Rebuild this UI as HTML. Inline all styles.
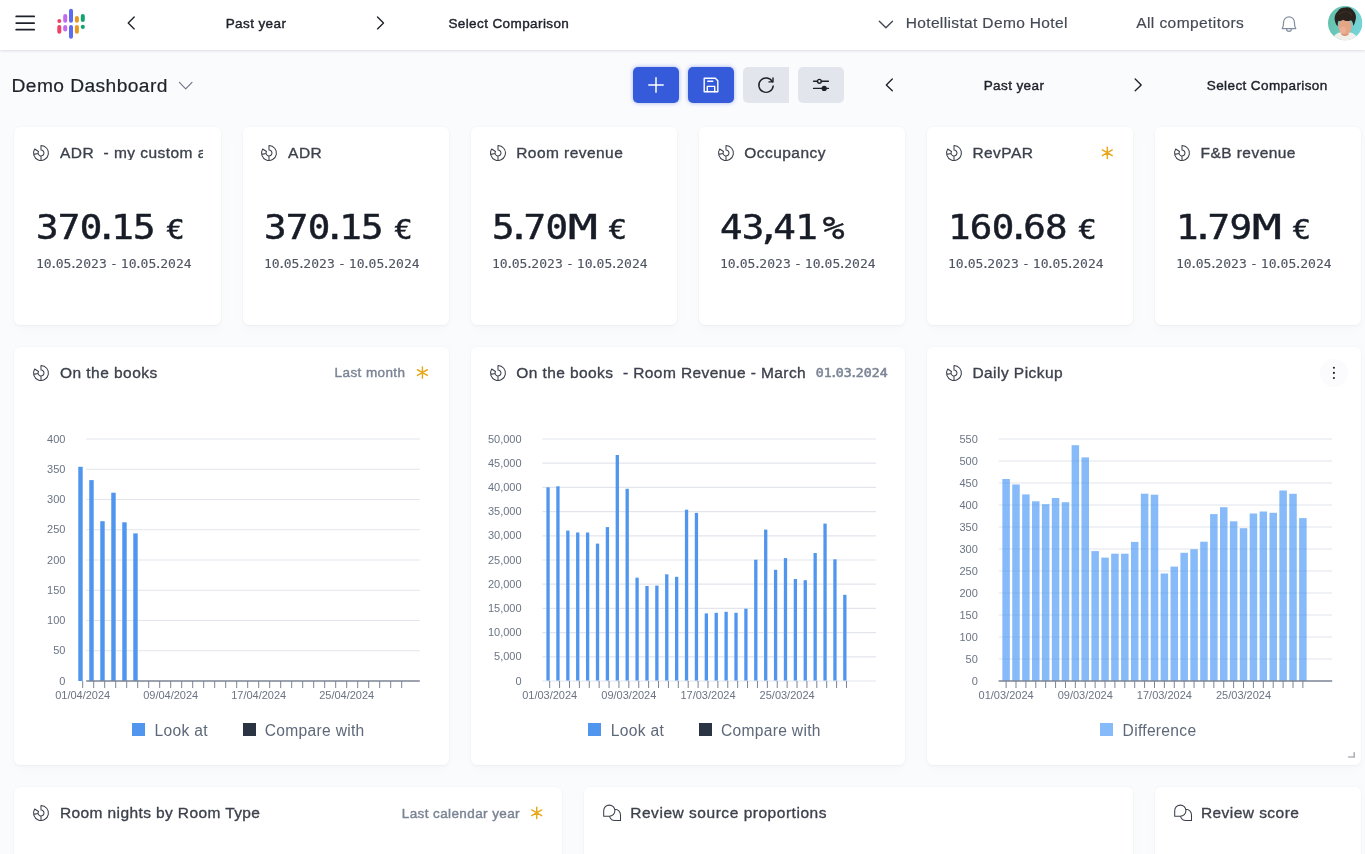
<!DOCTYPE html><html lang="en"><head><meta charset="utf-8"><title>Demo Dashboard</title><style>
*{box-sizing:border-box}
html,body{margin:0;padding:0}
body{width:1365px;height:854px;overflow:hidden;background:#fafbfd;font-family:"Liberation Sans",sans-serif;position:relative;color:#1f2937}
#root{position:absolute;left:0;top:0;width:1365px;height:854px;will-change:transform}
.t{position:absolute;white-space:nowrap}
.m{-webkit-text-stroke:0.42px currentColor}
.tt{-webkit-text-stroke:0.34px currentColor}
.hdr{position:absolute;left:0;top:0;width:1365px;height:50px;background:#fff;box-shadow:0 1px 3px rgba(15,23,42,.09),0 1px 2px rgba(15,23,42,.05)}
.card{position:absolute;background:#fff;border-radius:6px;box-shadow:0 0 3px rgba(15,23,42,.045),0 1px 3px rgba(15,23,42,.04),0 4px 10px rgba(15,23,42,.02)}
.btn{position:absolute;top:67px;width:46px;height:36px;border-radius:5px}
.btn.b{background:#355bdb;box-shadow:0 0 4px rgba(53,91,219,.45)}
.btn.g{background:#e2e5eb}
svg{position:absolute;overflow:visible}
.num{font-family:"DejaVu Sans Mono","Liberation Mono",monospace;-webkit-text-stroke:0.48px currentColor;transform:scaleX(1.13);transform-origin:0 0;letter-spacing:-0.65px}
.num i{font-style:normal;display:inline-block;margin:0 -5.4px}
.num b{font-weight:normal;-webkit-text-stroke:0.3px currentColor;display:inline-block;transform:scaleX(1.34);transform-origin:0 50%;margin-right:7.2px}
.mono{font-family:"DejaVu Sans Mono","Liberation Mono",monospace}
.mono i{font-style:normal;display:inline-block;margin:0 -1.85px}
.dt{transform:scaleX(1.062);transform-origin:0 0;word-spacing:-4.5px}
</style></head><body><div id="root">
<div class="hdr"></div>
<svg style="left:0;top:0" width="60" height="50"><g stroke="#1d212a" stroke-width="1.7" stroke-linecap="round"><path d="M16.2 16.4H34.2M16.2 23.1H34.2M16.2 29.7H34.2"/></g></svg>
<svg style="left:0;top:0" width="100" height="50"><g stroke-linecap="round" stroke-width="4" fill="none"><path stroke="#ee4266" d="M59.3 20.9V21.1"/><path stroke="#ee4266" d="M59.3 26.9V31.7"/><path stroke="#c16bf0" d="M65.2 15.9V20.7"/><path stroke="#c16bf0" d="M65.2 26.9V29.5"/><path stroke="#5b6cf0" d="M71.0 10.8V20.7"/><path stroke="#5b6cf0" d="M71.0 26.9V36.8"/><path stroke="#e59a1f" d="M76.9 18.1V20.7"/><path stroke="#e59a1f" d="M76.9 26.9V31.7"/><path stroke="#12a370" d="M82.8 15.9V20.0"/><path stroke="#12a370" d="M82.8 26.7V26.9"/></g></svg>
<svg style="left:0;top:0" width="1365" height="120"><path d="M134.2 16.9L128.2 22.9L134.2 28.9" fill="none" stroke="#1d212a" stroke-width="1.35" stroke-linecap="round" stroke-linejoin="round"/></svg>
<svg style="left:0;top:0" width="1365" height="120"><path d="M377.5 16.9L383.5 22.9L377.5 28.9" fill="none" stroke="#1d212a" stroke-width="1.35" stroke-linecap="round" stroke-linejoin="round"/></svg>
<div class="t m" style="top:16.57px;font-size:13.5px;line-height:13.5px;color:#1d212a;left:56.00px;width:400px;text-align:center;letter-spacing:0.4px;">Past year</div>
<div class="t m" style="top:16.57px;font-size:13.5px;line-height:13.5px;color:#1d212a;left:448.40px;letter-spacing:0.4px;">Select Comparison</div>
<svg style="left:0;top:0" width="1365" height="120"><path d="M879.3 21.2L885.9 27.8L892.5 21.2" fill="none" stroke="#3f4754" stroke-width="1.35" stroke-linecap="round" stroke-linejoin="round"/></svg>
<div class="t " style="top:15.48px;font-size:15.5px;line-height:15.5px;color:#434955;left:905.70px;letter-spacing:0.36px;-webkit-text-stroke:0.18px currentColor;">Hotellistat Demo Hotel</div>
<div class="t " style="top:15.48px;font-size:15.5px;line-height:15.5px;color:#434955;left:1136.20px;letter-spacing:0.43px;-webkit-text-stroke:0.18px currentColor;">All competitors</div>
<svg style="left:1280px;top:14px" width="18" height="20" viewBox="0 0 18 20"><g fill="none" stroke="#848da0" stroke-width="1.2" stroke-linejoin="round" stroke-linecap="round"><path d="M2.2 14.6C3.4 12.6 3.6 10.4 3.6 8.2a5.4 5.4 0 0 1 10.8 0c0 2.2.2 4.4 1.4 6.4Z"/><path d="M6.6 15a2.4 2.4 0 0 0 4.8 0"/></g></svg>
<svg style="left:1328.3px;top:5.9px" width="34.4" height="34.4" viewBox="0 0 35 35"><defs><clipPath id="av"><circle cx="17.5" cy="17.5" r="17.5"/></clipPath><linearGradient id="avg" x1="0" y1="0" x2="1" y2="0.3"><stop offset="0" stop-color="#62bfa6"/><stop offset="1" stop-color="#74d3d6"/></linearGradient><filter id="avb" x="-10%" y="-10%" width="120%" height="120%"><feGaussianBlur stdDeviation="0.55"/></filter></defs><g clip-path="url(#av)"><rect width="35" height="35" fill="url(#avg)"/><g filter="url(#avb)"><path d="M5 33c1.500-4.500 5.500-6.500 12.500-6.500s10.500 2 12.500 6.500v4H5Z" fill="#f1efe9"/><path d="M13.500 24h7.500v5c-2 2-5.500 2-7.500 0Z" fill="#d99477"/><ellipse cx="17.300" cy="21" rx="6.600" ry="8" fill="#e4a687"/><ellipse cx="15.200" cy="24.500" rx="3" ry="3.500" fill="#efb79b" opacity=".7"/><path d="M7.800 17.500c-2.300-5.500-.500-10 2.500-12.500c1-2.500 4.500-3.800 7.500-3.500c3.500-.800 7 1 8.500 4c2.500 2.500 2.800 7 1.200 10.500c-.300 1.800-1 3.200-2 4c.200-2.800-.800-4.800-2.300-5.500c-2.500 1.500-6 .800-8-.500c-1.500 1.300-3.500 1.500-4.500 1c-.800 1.500-1 3.500-.600 5.500c-1.200-.700-2-1.800-2.300-3Z" fill="#2b221d"/><path d="M11 9c2-2.500 5-3.500 8-3M20 6c2 .500 4 2 4.500 4.500" stroke="#4a3a31" stroke-width="1.2" fill="none" opacity=".6"/></g></g></svg>
<div class="t " style="top:75.95px;font-size:19.2px;line-height:19.2px;color:#1d212a;left:11.60px;letter-spacing:0.42px;-webkit-text-stroke:0.2px currentColor;">Demo Dashboard</div>
<svg style="left:0;top:0" width="1365" height="120"><path d="M179.39999999999998 82.39999999999999L185.7 88.8L192.0 82.39999999999999" fill="none" stroke="#6f7686" stroke-width="1.15" stroke-linecap="round" stroke-linejoin="round"/></svg>
<div class="btn b" style="left:633px"></div><div class="btn b" style="left:688px"></div><div class="btn g" style="left:743px;border-radius:5px 0 0 5px"></div><div class="btn g" style="left:798px"></div>
<svg style="left:633px;top:67px" width="46" height="36"><path d="M23 10.800V25.200M15.800 18H30.200" stroke="#fff" stroke-width="1.5" stroke-linecap="round"/></svg>
<svg style="left:688px;top:67px" width="46" height="36"><g fill="none" stroke="#fff" stroke-width="1.4" stroke-linejoin="round" stroke-linecap="round"><path d="M16.200 11.200H27.300L29.800 13.700V24.800H16.200Z"/><path d="M19.300 24.800V19.400H26.700V24.800"/><path d="M19.800 14.200H24.800"/></g></svg>
<svg style="left:743px;top:67px" width="46" height="36"><g fill="none" stroke="#1d212a" stroke-width="1.4" stroke-linecap="round" stroke-linejoin="round"><path d="M29.400 14.800A7.200 7.200 0 1 0 30.200 18.900"/><path d="M30.000 10.900V14.900H26.000"/></g></svg>
<svg style="left:798px;top:67px" width="46" height="36"><g fill="none" stroke="#1d212a" stroke-width="1.4" stroke-linecap="round"><path d="M15.600 14.300H19.500M23.300 14.300H30.400M15.600 21.400H24.300M28.100 21.400H30.400"/><circle cx="21.400" cy="14.300" r="1.900"/><circle cx="26.200" cy="21.400" r="1.900" fill="#1d212a"/></g></svg>
<svg style="left:0;top:0" width="1365" height="120"><path d="M892.3 79.0L886.3 84.9L892.3 90.80000000000001" fill="none" stroke="#1d212a" stroke-width="1.35" stroke-linecap="round" stroke-linejoin="round"/></svg>
<svg style="left:0;top:0" width="1365" height="120"><path d="M1135.2 79.0L1141.2 84.9L1135.2 90.80000000000001" fill="none" stroke="#1d212a" stroke-width="1.35" stroke-linecap="round" stroke-linejoin="round"/></svg>
<div class="t m" style="top:78.57px;font-size:13.5px;line-height:13.5px;color:#1d212a;left:814.00px;width:400px;text-align:center;letter-spacing:0.4px;">Past year</div>
<div class="t m" style="top:78.57px;font-size:13.5px;line-height:13.5px;color:#1d212a;left:1206.80px;letter-spacing:0.4px;">Select Comparison</div>
<div class="card" style="left:14.40px;top:127.00px;width:206.15px;height:198.00px"></div>
<svg style="left:33.30px;top:145.00px" width="16" height="16" viewBox="0 0 16 16"><path d="M8.0 0.5499999999999998A7.45 7.45 0 1 1 1.68 4.05L5.50 6.44A2.95 2.95 0 1 0 8.0 5.05Z M8.0 10.95V15.45M5.10 8.55L0.68 9.38" fill="none" stroke="#3a3f49" stroke-width="1.05" stroke-linejoin="round" stroke-linecap="round"/></svg>
<div class="t tt" style="top:144.58px;font-size:15.5px;line-height:15.5px;color:#3c414c;left:60.00px;letter-spacing:0.45px;max-width:142.5px;overflow:hidden;">ADR&nbsp; - my custom and long title</div>
<div class="t num" style="top:211.20px;font-size:33.2px;line-height:33.2px;color:#171c26;left:35.80px;">370<i class="p">.</i>15<span style="font-size:27px;margin-left:10px">€</span></div>
<div class="t mono dt" style="top:258.09px;font-size:12.3px;line-height:12.3px;color:#4e5461;left:35.70px;-webkit-text-stroke:0.1px currentColor;">10<i class="p">.</i>05<i class="p">.</i>2023 - 10<i class="p">.</i>05<i class="p">.</i>2024</div>
<div class="card" style="left:242.50px;top:127.00px;width:206.15px;height:198.00px"></div>
<svg style="left:261.40px;top:145.00px" width="16" height="16" viewBox="0 0 16 16"><path d="M8.0 0.5499999999999998A7.45 7.45 0 1 1 1.68 4.05L5.50 6.44A2.95 2.95 0 1 0 8.0 5.05Z M8.0 10.95V15.45M5.10 8.55L0.68 9.38" fill="none" stroke="#3a3f49" stroke-width="1.05" stroke-linejoin="round" stroke-linecap="round"/></svg>
<div class="t tt" style="top:144.58px;font-size:15.5px;line-height:15.5px;color:#3c414c;left:288.10px;letter-spacing:0.45px;">ADR</div>
<div class="t num" style="top:211.20px;font-size:33.2px;line-height:33.2px;color:#171c26;left:263.90px;">370<i class="p">.</i>15<span style="font-size:27px;margin-left:10px">€</span></div>
<div class="t mono dt" style="top:258.09px;font-size:12.3px;line-height:12.3px;color:#4e5461;left:263.80px;-webkit-text-stroke:0.1px currentColor;">10<i class="p">.</i>05<i class="p">.</i>2023 - 10<i class="p">.</i>05<i class="p">.</i>2024</div>
<div class="card" style="left:470.60px;top:127.00px;width:206.15px;height:198.00px"></div>
<svg style="left:489.50px;top:145.00px" width="16" height="16" viewBox="0 0 16 16"><path d="M8.0 0.5499999999999998A7.45 7.45 0 1 1 1.68 4.05L5.50 6.44A2.95 2.95 0 1 0 8.0 5.05Z M8.0 10.95V15.45M5.10 8.55L0.68 9.38" fill="none" stroke="#3a3f49" stroke-width="1.05" stroke-linejoin="round" stroke-linecap="round"/></svg>
<div class="t tt" style="top:144.58px;font-size:15.5px;line-height:15.5px;color:#3c414c;left:516.20px;letter-spacing:0.45px;">Room revenue</div>
<div class="t num" style="top:211.20px;font-size:33.2px;line-height:33.2px;color:#171c26;left:492.00px;">5<i class="p">.</i>70<b>M</b><span style="font-size:27px;margin-left:10px">€</span></div>
<div class="t mono dt" style="top:258.09px;font-size:12.3px;line-height:12.3px;color:#4e5461;left:491.90px;-webkit-text-stroke:0.1px currentColor;">10<i class="p">.</i>05<i class="p">.</i>2023 - 10<i class="p">.</i>05<i class="p">.</i>2024</div>
<div class="card" style="left:698.70px;top:127.00px;width:206.15px;height:198.00px"></div>
<svg style="left:717.60px;top:145.00px" width="16" height="16" viewBox="0 0 16 16"><path d="M8.0 0.5499999999999998A7.45 7.45 0 1 1 1.68 4.05L5.50 6.44A2.95 2.95 0 1 0 8.0 5.05Z M8.0 10.95V15.45M5.10 8.55L0.68 9.38" fill="none" stroke="#3a3f49" stroke-width="1.05" stroke-linejoin="round" stroke-linecap="round"/></svg>
<div class="t tt" style="top:144.58px;font-size:15.5px;line-height:15.5px;color:#3c414c;left:744.30px;letter-spacing:0.45px;">Occupancy</div>
<div class="t num" style="top:211.20px;font-size:33.2px;line-height:33.2px;color:#171c26;left:720.10px;">43<i class="p">,</i>41<span style="font-size:32px;margin-left:5px">%</span></div>
<div class="t mono dt" style="top:258.09px;font-size:12.3px;line-height:12.3px;color:#4e5461;left:720.00px;-webkit-text-stroke:0.1px currentColor;">10<i class="p">.</i>05<i class="p">.</i>2023 - 10<i class="p">.</i>05<i class="p">.</i>2024</div>
<div class="card" style="left:926.80px;top:127.00px;width:206.15px;height:198.00px"></div>
<svg style="left:945.70px;top:145.00px" width="16" height="16" viewBox="0 0 16 16"><path d="M8.0 0.5499999999999998A7.45 7.45 0 1 1 1.68 4.05L5.50 6.44A2.95 2.95 0 1 0 8.0 5.05Z M8.0 10.95V15.45M5.10 8.55L0.68 9.38" fill="none" stroke="#3a3f49" stroke-width="1.05" stroke-linejoin="round" stroke-linecap="round"/></svg>
<div class="t tt" style="top:144.58px;font-size:15.5px;line-height:15.5px;color:#3c414c;left:972.40px;letter-spacing:0.45px;">RevPAR</div>
<div class="t num" style="top:211.20px;font-size:33.2px;line-height:33.2px;color:#171c26;left:948.20px;">160<i class="p">.</i>68<span style="font-size:27px;margin-left:10px">€</span></div>
<div class="t mono dt" style="top:258.09px;font-size:12.3px;line-height:12.3px;color:#4e5461;left:948.10px;-webkit-text-stroke:0.1px currentColor;">10<i class="p">.</i>05<i class="p">.</i>2023 - 10<i class="p">.</i>05<i class="p">.</i>2024</div>
<div class="card" style="left:1154.90px;top:127.00px;width:206.15px;height:198.00px"></div>
<svg style="left:1173.80px;top:145.00px" width="16" height="16" viewBox="0 0 16 16"><path d="M8.0 0.5499999999999998A7.45 7.45 0 1 1 1.68 4.05L5.50 6.44A2.95 2.95 0 1 0 8.0 5.05Z M8.0 10.95V15.45M5.10 8.55L0.68 9.38" fill="none" stroke="#3a3f49" stroke-width="1.05" stroke-linejoin="round" stroke-linecap="round"/></svg>
<div class="t tt" style="top:144.58px;font-size:15.5px;line-height:15.5px;color:#3c414c;left:1200.50px;letter-spacing:0.45px;">F&amp;B revenue</div>
<div class="t num" style="top:211.20px;font-size:33.2px;line-height:33.2px;color:#171c26;left:1176.30px;">1<i class="p">.</i>79<b>M</b><span style="font-size:27px;margin-left:10px">€</span></div>
<div class="t mono dt" style="top:258.09px;font-size:12.3px;line-height:12.3px;color:#4e5461;left:1176.20px;-webkit-text-stroke:0.1px currentColor;">10<i class="p">.</i>05<i class="p">.</i>2023 - 10<i class="p">.</i>05<i class="p">.</i>2024</div>
<svg style="left:0;top:0" width="1365" height="854"><path d="M1107.30 147.10L1107.30 158.50M1102.36 149.95L1112.24 155.65M1102.36 155.65L1112.24 149.95" stroke="#e8a81c" stroke-width="1.45" stroke-linecap="round" fill="none"/></svg>
<div class="card" style="left:14.40px;top:346.60px;width:434.25px;height:418.60px"></div>
<svg style="left:0;top:0" width="1365" height="854"><path d="M86.2 650.75H419.8" stroke="#e3e5eb" stroke-width="1.2"/><path d="M86.2 620.50H419.8" stroke="#e3e5eb" stroke-width="1.2"/><path d="M86.2 590.25H419.8" stroke="#e3e5eb" stroke-width="1.2"/><path d="M86.2 560.00H419.8" stroke="#e3e5eb" stroke-width="1.2"/><path d="M86.2 529.75H419.8" stroke="#e3e5eb" stroke-width="1.2"/><path d="M86.2 499.50H419.8" stroke="#e3e5eb" stroke-width="1.2"/><path d="M86.2 469.25H419.8" stroke="#e3e5eb" stroke-width="1.2"/><path d="M86.2 439.00H419.8" stroke="#e3e5eb" stroke-width="1.2"/><rect x="78.25" y="466.80" width="4.45" height="214.20" fill="#5096ee"/><rect x="89.25" y="480.10" width="4.45" height="200.90" fill="#5096ee"/><rect x="100.25" y="521.20" width="4.45" height="159.80" fill="#5096ee"/><rect x="111.25" y="492.70" width="4.45" height="188.30" fill="#5096ee"/><rect x="122.25" y="522.30" width="4.45" height="158.70" fill="#5096ee"/><rect x="133.25" y="533.40" width="4.45" height="147.60" fill="#5096ee"/><path d="M86.2 681.00H419.8" stroke="#7b8494" stroke-width="1.6"/><path d="M82.70 681.00V688.00" stroke="#7b8494" stroke-width="1"/><path d="M93.70 681.00V688.00" stroke="#7b8494" stroke-width="1"/><path d="M104.70 681.00V688.00" stroke="#7b8494" stroke-width="1"/><path d="M115.70 681.00V688.00" stroke="#7b8494" stroke-width="1"/><path d="M126.70 681.00V688.00" stroke="#7b8494" stroke-width="1"/><path d="M137.70 681.00V688.00" stroke="#7b8494" stroke-width="1"/><path d="M148.70 681.00V688.00" stroke="#7b8494" stroke-width="1"/><path d="M159.70 681.00V688.00" stroke="#7b8494" stroke-width="1"/><path d="M170.70 681.00V688.00" stroke="#7b8494" stroke-width="1"/><path d="M181.70 681.00V688.00" stroke="#7b8494" stroke-width="1"/><path d="M192.70 681.00V688.00" stroke="#7b8494" stroke-width="1"/><path d="M203.70 681.00V688.00" stroke="#7b8494" stroke-width="1"/><path d="M214.70 681.00V688.00" stroke="#7b8494" stroke-width="1"/><path d="M225.70 681.00V688.00" stroke="#7b8494" stroke-width="1"/><path d="M236.70 681.00V688.00" stroke="#7b8494" stroke-width="1"/><path d="M247.70 681.00V688.00" stroke="#7b8494" stroke-width="1"/><path d="M258.70 681.00V688.00" stroke="#7b8494" stroke-width="1"/><path d="M269.70 681.00V688.00" stroke="#7b8494" stroke-width="1"/><path d="M280.70 681.00V688.00" stroke="#7b8494" stroke-width="1"/><path d="M291.70 681.00V688.00" stroke="#7b8494" stroke-width="1"/><path d="M302.70 681.00V688.00" stroke="#7b8494" stroke-width="1"/><path d="M313.70 681.00V688.00" stroke="#7b8494" stroke-width="1"/><path d="M324.70 681.00V688.00" stroke="#7b8494" stroke-width="1"/><path d="M335.70 681.00V688.00" stroke="#7b8494" stroke-width="1"/><path d="M346.70 681.00V688.00" stroke="#7b8494" stroke-width="1"/><path d="M357.70 681.00V688.00" stroke="#7b8494" stroke-width="1"/><path d="M368.70 681.00V688.00" stroke="#7b8494" stroke-width="1"/><path d="M379.70 681.00V688.00" stroke="#7b8494" stroke-width="1"/><path d="M390.70 681.00V688.00" stroke="#7b8494" stroke-width="1"/><path d="M401.70 681.00V688.00" stroke="#7b8494" stroke-width="1"/></svg>
<div class="t " style="top:675.59px;font-size:11px;line-height:11px;color:#6b7484;right:1299.60px;">0</div>
<div class="t " style="top:645.34px;font-size:11px;line-height:11px;color:#6b7484;right:1299.60px;">50</div>
<div class="t " style="top:615.09px;font-size:11px;line-height:11px;color:#6b7484;right:1299.60px;">100</div>
<div class="t " style="top:584.84px;font-size:11px;line-height:11px;color:#6b7484;right:1299.60px;">150</div>
<div class="t " style="top:554.59px;font-size:11px;line-height:11px;color:#6b7484;right:1299.60px;">200</div>
<div class="t " style="top:524.34px;font-size:11px;line-height:11px;color:#6b7484;right:1299.60px;">250</div>
<div class="t " style="top:494.09px;font-size:11px;line-height:11px;color:#6b7484;right:1299.60px;">300</div>
<div class="t " style="top:463.84px;font-size:11px;line-height:11px;color:#6b7484;right:1299.60px;">350</div>
<div class="t " style="top:433.59px;font-size:11px;line-height:11px;color:#6b7484;right:1299.60px;">400</div>
<div class="t " style="top:689.69px;font-size:11px;line-height:11px;color:#6b7484;left:-117.30px;width:400px;text-align:center;">01/04/2024</div>
<div class="t " style="top:689.69px;font-size:11px;line-height:11px;color:#6b7484;left:-29.30px;width:400px;text-align:center;">09/04/2024</div>
<div class="t " style="top:689.69px;font-size:11px;line-height:11px;color:#6b7484;left:58.70px;width:400px;text-align:center;">17/04/2024</div>
<div class="t " style="top:689.69px;font-size:11px;line-height:11px;color:#6b7484;left:146.70px;width:400px;text-align:center;">25/04/2024</div>
<div style="position:absolute;left:131.90px;top:723px;width:13.1px;height:13.1px;background:#5096ee;opacity:1"></div>
<div class="t " style="top:722.89px;font-size:15.6px;line-height:15.6px;color:#5d6879;left:154.60px;letter-spacing:0.3px;">Look at</div>
<div style="position:absolute;left:242.60px;top:723px;width:13.1px;height:13.1px;background:#2b3442;opacity:1"></div>
<div class="t " style="top:722.89px;font-size:15.6px;line-height:15.6px;color:#5d6879;left:264.80px;letter-spacing:0.3px;">Compare with</div>
<svg style="left:33.30px;top:364.60px" width="16" height="16" viewBox="0 0 16 16"><path d="M8.0 0.5499999999999998A7.45 7.45 0 1 1 1.68 4.05L5.50 6.44A2.95 2.95 0 1 0 8.0 5.05Z M8.0 10.95V15.45M5.10 8.55L0.68 9.38" fill="none" stroke="#3a3f49" stroke-width="1.05" stroke-linejoin="round" stroke-linecap="round"/></svg>
<div class="t tt" style="top:364.98px;font-size:15.5px;line-height:15.5px;color:#3c414c;left:60.00px;letter-spacing:0.45px;">On the books</div>
<div class="t m" style="top:366.47px;font-size:13.5px;line-height:13.5px;color:#7b8494;right:959.60px;letter-spacing:0.4px;">Last month</div>
<svg style="left:0;top:0" width="1365" height="854"><path d="M422.40 366.90L422.40 378.30M417.46 369.75L427.34 375.45M417.46 375.45L427.34 369.75" stroke="#e8a81c" stroke-width="1.45" stroke-linecap="round" fill="none"/></svg>
<div class="card" style="left:470.60px;top:346.60px;width:434.25px;height:418.60px"></div>
<svg style="left:0;top:0" width="1365" height="854"><path d="M542.4 656.80H876.0" stroke="#e3e5eb" stroke-width="1.2"/><path d="M542.4 632.60H876.0" stroke="#e3e5eb" stroke-width="1.2"/><path d="M542.4 608.40H876.0" stroke="#e3e5eb" stroke-width="1.2"/><path d="M542.4 584.20H876.0" stroke="#e3e5eb" stroke-width="1.2"/><path d="M542.4 560.00H876.0" stroke="#e3e5eb" stroke-width="1.2"/><path d="M542.4 535.80H876.0" stroke="#e3e5eb" stroke-width="1.2"/><path d="M542.4 511.60H876.0" stroke="#e3e5eb" stroke-width="1.2"/><path d="M542.4 487.40H876.0" stroke="#e3e5eb" stroke-width="1.2"/><path d="M542.4 463.20H876.0" stroke="#e3e5eb" stroke-width="1.2"/><path d="M542.4 439.00H876.0" stroke="#e3e5eb" stroke-width="1.2"/><rect x="546.40" y="487.30" width="3.3" height="193.70" fill="#5096ee"/><rect x="556.29" y="486.30" width="3.3" height="194.70" fill="#5096ee"/><rect x="566.19" y="530.60" width="3.3" height="150.40" fill="#5096ee"/><rect x="576.08" y="532.50" width="3.3" height="148.50" fill="#5096ee"/><rect x="585.97" y="532.50" width="3.3" height="148.50" fill="#5096ee"/><rect x="595.87" y="543.60" width="3.3" height="137.40" fill="#5096ee"/><rect x="605.76" y="527.10" width="3.3" height="153.90" fill="#5096ee"/><rect x="615.65" y="455.00" width="3.3" height="226.00" fill="#5096ee"/><rect x="625.54" y="488.80" width="3.3" height="192.20" fill="#5096ee"/><rect x="635.44" y="577.70" width="3.3" height="103.30" fill="#5096ee"/><rect x="645.33" y="586.00" width="3.3" height="95.00" fill="#5096ee"/><rect x="655.22" y="585.60" width="3.3" height="95.40" fill="#5096ee"/><rect x="665.12" y="574.30" width="3.3" height="106.70" fill="#5096ee"/><rect x="675.01" y="576.80" width="3.3" height="104.20" fill="#5096ee"/><rect x="684.90" y="509.70" width="3.3" height="171.30" fill="#5096ee"/><rect x="694.79" y="512.90" width="3.3" height="168.10" fill="#5096ee"/><rect x="704.69" y="613.40" width="3.3" height="67.60" fill="#5096ee"/><rect x="714.58" y="612.80" width="3.3" height="68.20" fill="#5096ee"/><rect x="724.47" y="611.80" width="3.3" height="69.20" fill="#5096ee"/><rect x="734.37" y="612.80" width="3.3" height="68.20" fill="#5096ee"/><rect x="744.26" y="608.70" width="3.3" height="72.30" fill="#5096ee"/><rect x="754.15" y="559.70" width="3.3" height="121.30" fill="#5096ee"/><rect x="764.05" y="529.60" width="3.3" height="151.40" fill="#5096ee"/><rect x="773.94" y="569.80" width="3.3" height="111.20" fill="#5096ee"/><rect x="783.83" y="558.10" width="3.3" height="122.90" fill="#5096ee"/><rect x="793.73" y="579.00" width="3.3" height="102.00" fill="#5096ee"/><rect x="803.62" y="580.20" width="3.3" height="100.80" fill="#5096ee"/><rect x="813.51" y="553.00" width="3.3" height="128.00" fill="#5096ee"/><rect x="823.40" y="523.60" width="3.3" height="157.40" fill="#5096ee"/><rect x="833.30" y="559.30" width="3.3" height="121.70" fill="#5096ee"/><rect x="843.19" y="594.80" width="3.3" height="86.20" fill="#5096ee"/><path d="M542.4 681.00H876.0" stroke="#e3e5eb" stroke-width="1.2"/><path d="M549.70 681.00V688.00" stroke="#7b8494" stroke-width="1"/><path d="M559.59 681.00V688.00" stroke="#7b8494" stroke-width="1"/><path d="M569.49 681.00V688.00" stroke="#7b8494" stroke-width="1"/><path d="M579.38 681.00V688.00" stroke="#7b8494" stroke-width="1"/><path d="M589.27 681.00V688.00" stroke="#7b8494" stroke-width="1"/><path d="M599.16 681.00V688.00" stroke="#7b8494" stroke-width="1"/><path d="M609.06 681.00V688.00" stroke="#7b8494" stroke-width="1"/><path d="M618.95 681.00V688.00" stroke="#7b8494" stroke-width="1"/><path d="M628.84 681.00V688.00" stroke="#7b8494" stroke-width="1"/><path d="M638.74 681.00V688.00" stroke="#7b8494" stroke-width="1"/><path d="M648.63 681.00V688.00" stroke="#7b8494" stroke-width="1"/><path d="M658.52 681.00V688.00" stroke="#7b8494" stroke-width="1"/><path d="M668.42 681.00V688.00" stroke="#7b8494" stroke-width="1"/><path d="M678.31 681.00V688.00" stroke="#7b8494" stroke-width="1"/><path d="M688.20 681.00V688.00" stroke="#7b8494" stroke-width="1"/><path d="M698.09 681.00V688.00" stroke="#7b8494" stroke-width="1"/><path d="M707.99 681.00V688.00" stroke="#7b8494" stroke-width="1"/><path d="M717.88 681.00V688.00" stroke="#7b8494" stroke-width="1"/><path d="M727.77 681.00V688.00" stroke="#7b8494" stroke-width="1"/><path d="M737.67 681.00V688.00" stroke="#7b8494" stroke-width="1"/><path d="M747.56 681.00V688.00" stroke="#7b8494" stroke-width="1"/><path d="M757.45 681.00V688.00" stroke="#7b8494" stroke-width="1"/><path d="M767.35 681.00V688.00" stroke="#7b8494" stroke-width="1"/><path d="M777.24 681.00V688.00" stroke="#7b8494" stroke-width="1"/><path d="M787.13 681.00V688.00" stroke="#7b8494" stroke-width="1"/><path d="M797.02 681.00V688.00" stroke="#7b8494" stroke-width="1"/><path d="M806.92 681.00V688.00" stroke="#7b8494" stroke-width="1"/><path d="M816.81 681.00V688.00" stroke="#7b8494" stroke-width="1"/><path d="M826.70 681.00V688.00" stroke="#7b8494" stroke-width="1"/><path d="M836.60 681.00V688.00" stroke="#7b8494" stroke-width="1"/><path d="M846.49 681.00V688.00" stroke="#7b8494" stroke-width="1"/></svg>
<div class="t " style="top:675.59px;font-size:11px;line-height:11px;color:#6b7484;right:843.40px;">0</div>
<div class="t " style="top:651.39px;font-size:11px;line-height:11px;color:#6b7484;right:843.40px;">5,000</div>
<div class="t " style="top:627.19px;font-size:11px;line-height:11px;color:#6b7484;right:843.40px;">10,000</div>
<div class="t " style="top:602.99px;font-size:11px;line-height:11px;color:#6b7484;right:843.40px;">15,000</div>
<div class="t " style="top:578.79px;font-size:11px;line-height:11px;color:#6b7484;right:843.40px;">20,000</div>
<div class="t " style="top:554.59px;font-size:11px;line-height:11px;color:#6b7484;right:843.40px;">25,000</div>
<div class="t " style="top:530.39px;font-size:11px;line-height:11px;color:#6b7484;right:843.40px;">30,000</div>
<div class="t " style="top:506.19px;font-size:11px;line-height:11px;color:#6b7484;right:843.40px;">35,000</div>
<div class="t " style="top:481.99px;font-size:11px;line-height:11px;color:#6b7484;right:843.40px;">40,000</div>
<div class="t " style="top:457.79px;font-size:11px;line-height:11px;color:#6b7484;right:843.40px;">45,000</div>
<div class="t " style="top:433.59px;font-size:11px;line-height:11px;color:#6b7484;right:843.40px;">50,000</div>
<div class="t " style="top:689.69px;font-size:11px;line-height:11px;color:#6b7484;left:349.70px;width:400px;text-align:center;">01/03/2024</div>
<div class="t " style="top:689.69px;font-size:11px;line-height:11px;color:#6b7484;left:428.84px;width:400px;text-align:center;">09/03/2024</div>
<div class="t " style="top:689.69px;font-size:11px;line-height:11px;color:#6b7484;left:507.99px;width:400px;text-align:center;">17/03/2024</div>
<div class="t " style="top:689.69px;font-size:11px;line-height:11px;color:#6b7484;left:587.13px;width:400px;text-align:center;">25/03/2024</div>
<div style="position:absolute;left:588.10px;top:723px;width:13.1px;height:13.1px;background:#5096ee;opacity:1"></div>
<div class="t " style="top:722.89px;font-size:15.6px;line-height:15.6px;color:#5d6879;left:610.80px;letter-spacing:0.3px;">Look at</div>
<div style="position:absolute;left:698.80px;top:723px;width:13.1px;height:13.1px;background:#2b3442;opacity:1"></div>
<div class="t " style="top:722.89px;font-size:15.6px;line-height:15.6px;color:#5d6879;left:721.00px;letter-spacing:0.3px;">Compare with</div>
<svg style="left:489.50px;top:364.60px" width="16" height="16" viewBox="0 0 16 16"><path d="M8.0 0.5499999999999998A7.45 7.45 0 1 1 1.68 4.05L5.50 6.44A2.95 2.95 0 1 0 8.0 5.05Z M8.0 10.95V15.45M5.10 8.55L0.68 9.38" fill="none" stroke="#3a3f49" stroke-width="1.05" stroke-linejoin="round" stroke-linecap="round"/></svg>
<div class="t tt" style="top:364.98px;font-size:15.5px;line-height:15.5px;color:#3c414c;left:516.20px;letter-spacing:0.42px;">On the books&nbsp; - Room Revenue - March</div>
<div class="t mono" style="top:367.09px;font-size:12.3px;line-height:12.3px;color:#7b8494;right:477.50px;-webkit-text-stroke:0.5px currentColor;transform:scaleX(1.08);transform-origin:100% 0;">01<i class="p">.</i>03<i class="p">.</i>2024</div>
<div class="card" style="left:926.80px;top:346.60px;width:434.25px;height:418.60px"></div>
<svg style="left:0;top:0" width="1365" height="854"><path d="M998.6 659.00H1332.2" stroke="#e3e5eb" stroke-width="1.2"/><path d="M998.6 637.00H1332.2" stroke="#e3e5eb" stroke-width="1.2"/><path d="M998.6 615.00H1332.2" stroke="#e3e5eb" stroke-width="1.2"/><path d="M998.6 593.00H1332.2" stroke="#e3e5eb" stroke-width="1.2"/><path d="M998.6 571.00H1332.2" stroke="#e3e5eb" stroke-width="1.2"/><path d="M998.6 549.00H1332.2" stroke="#e3e5eb" stroke-width="1.2"/><path d="M998.6 527.00H1332.2" stroke="#e3e5eb" stroke-width="1.2"/><path d="M998.6 505.00H1332.2" stroke="#e3e5eb" stroke-width="1.2"/><path d="M998.6 483.00H1332.2" stroke="#e3e5eb" stroke-width="1.2"/><path d="M998.6 461.00H1332.2" stroke="#e3e5eb" stroke-width="1.2"/><path d="M998.6 439.00H1332.2" stroke="#e3e5eb" stroke-width="1.2"/><rect x="1002.35" y="479.00" width="7.5" height="202.00" fill="#4595f4" fill-opacity="0.65"/><rect x="1012.24" y="484.50" width="7.5" height="196.50" fill="#4595f4" fill-opacity="0.65"/><rect x="1022.14" y="494.40" width="7.5" height="186.60" fill="#4595f4" fill-opacity="0.65"/><rect x="1032.03" y="501.30" width="7.5" height="179.70" fill="#4595f4" fill-opacity="0.65"/><rect x="1041.92" y="504.20" width="7.5" height="176.80" fill="#4595f4" fill-opacity="0.65"/><rect x="1051.82" y="498.00" width="7.5" height="183.00" fill="#4595f4" fill-opacity="0.65"/><rect x="1061.71" y="502.20" width="7.5" height="178.80" fill="#4595f4" fill-opacity="0.65"/><rect x="1071.60" y="445.20" width="7.5" height="235.80" fill="#4595f4" fill-opacity="0.65"/><rect x="1081.49" y="457.40" width="7.5" height="223.60" fill="#4595f4" fill-opacity="0.65"/><rect x="1091.39" y="551.10" width="7.5" height="129.90" fill="#4595f4" fill-opacity="0.65"/><rect x="1101.28" y="557.60" width="7.5" height="123.40" fill="#4595f4" fill-opacity="0.65"/><rect x="1111.17" y="553.70" width="7.5" height="127.30" fill="#4595f4" fill-opacity="0.65"/><rect x="1121.07" y="553.70" width="7.5" height="127.30" fill="#4595f4" fill-opacity="0.65"/><rect x="1130.96" y="541.90" width="7.5" height="139.10" fill="#4595f4" fill-opacity="0.65"/><rect x="1140.85" y="493.70" width="7.5" height="187.30" fill="#4595f4" fill-opacity="0.65"/><rect x="1150.75" y="494.70" width="7.5" height="186.30" fill="#4595f4" fill-opacity="0.65"/><rect x="1160.64" y="573.50" width="7.5" height="107.50" fill="#4595f4" fill-opacity="0.65"/><rect x="1170.53" y="566.60" width="7.5" height="114.40" fill="#4595f4" fill-opacity="0.65"/><rect x="1180.42" y="552.80" width="7.5" height="128.20" fill="#4595f4" fill-opacity="0.65"/><rect x="1190.32" y="549.20" width="7.5" height="131.80" fill="#4595f4" fill-opacity="0.65"/><rect x="1200.21" y="541.70" width="7.5" height="139.30" fill="#4595f4" fill-opacity="0.65"/><rect x="1210.10" y="514.10" width="7.5" height="166.90" fill="#4595f4" fill-opacity="0.65"/><rect x="1220.00" y="507.20" width="7.5" height="173.80" fill="#4595f4" fill-opacity="0.65"/><rect x="1229.89" y="521.30" width="7.5" height="159.70" fill="#4595f4" fill-opacity="0.65"/><rect x="1239.78" y="528.20" width="7.5" height="152.80" fill="#4595f4" fill-opacity="0.65"/><rect x="1249.67" y="513.50" width="7.5" height="167.50" fill="#4595f4" fill-opacity="0.65"/><rect x="1259.57" y="511.50" width="7.5" height="169.50" fill="#4595f4" fill-opacity="0.65"/><rect x="1269.46" y="512.80" width="7.5" height="168.20" fill="#4595f4" fill-opacity="0.65"/><rect x="1279.35" y="490.50" width="7.5" height="190.50" fill="#4595f4" fill-opacity="0.65"/><rect x="1289.25" y="493.80" width="7.5" height="187.20" fill="#4595f4" fill-opacity="0.65"/><rect x="1299.14" y="518.10" width="7.5" height="162.90" fill="#4595f4" fill-opacity="0.65"/><path d="M998.6 681.00H1332.2" stroke="#7b8494" stroke-width="1.6"/><path d="M1006.10 681.00V688.00" stroke="#7b8494" stroke-width="1"/><path d="M1015.99 681.00V688.00" stroke="#7b8494" stroke-width="1"/><path d="M1025.89 681.00V688.00" stroke="#7b8494" stroke-width="1"/><path d="M1035.78 681.00V688.00" stroke="#7b8494" stroke-width="1"/><path d="M1045.67 681.00V688.00" stroke="#7b8494" stroke-width="1"/><path d="M1055.57 681.00V688.00" stroke="#7b8494" stroke-width="1"/><path d="M1065.46 681.00V688.00" stroke="#7b8494" stroke-width="1"/><path d="M1075.35 681.00V688.00" stroke="#7b8494" stroke-width="1"/><path d="M1085.24 681.00V688.00" stroke="#7b8494" stroke-width="1"/><path d="M1095.14 681.00V688.00" stroke="#7b8494" stroke-width="1"/><path d="M1105.03 681.00V688.00" stroke="#7b8494" stroke-width="1"/><path d="M1114.92 681.00V688.00" stroke="#7b8494" stroke-width="1"/><path d="M1124.82 681.00V688.00" stroke="#7b8494" stroke-width="1"/><path d="M1134.71 681.00V688.00" stroke="#7b8494" stroke-width="1"/><path d="M1144.60 681.00V688.00" stroke="#7b8494" stroke-width="1"/><path d="M1154.50 681.00V688.00" stroke="#7b8494" stroke-width="1"/><path d="M1164.39 681.00V688.00" stroke="#7b8494" stroke-width="1"/><path d="M1174.28 681.00V688.00" stroke="#7b8494" stroke-width="1"/><path d="M1184.17 681.00V688.00" stroke="#7b8494" stroke-width="1"/><path d="M1194.07 681.00V688.00" stroke="#7b8494" stroke-width="1"/><path d="M1203.96 681.00V688.00" stroke="#7b8494" stroke-width="1"/><path d="M1213.85 681.00V688.00" stroke="#7b8494" stroke-width="1"/><path d="M1223.75 681.00V688.00" stroke="#7b8494" stroke-width="1"/><path d="M1233.64 681.00V688.00" stroke="#7b8494" stroke-width="1"/><path d="M1243.53 681.00V688.00" stroke="#7b8494" stroke-width="1"/><path d="M1253.42 681.00V688.00" stroke="#7b8494" stroke-width="1"/><path d="M1263.32 681.00V688.00" stroke="#7b8494" stroke-width="1"/><path d="M1273.21 681.00V688.00" stroke="#7b8494" stroke-width="1"/><path d="M1283.10 681.00V688.00" stroke="#7b8494" stroke-width="1"/><path d="M1293.00 681.00V688.00" stroke="#7b8494" stroke-width="1"/><path d="M1302.89 681.00V688.00" stroke="#7b8494" stroke-width="1"/></svg>
<div class="t " style="top:675.59px;font-size:11px;line-height:11px;color:#6b7484;right:387.20px;">0</div>
<div class="t " style="top:653.59px;font-size:11px;line-height:11px;color:#6b7484;right:387.20px;">50</div>
<div class="t " style="top:631.59px;font-size:11px;line-height:11px;color:#6b7484;right:387.20px;">100</div>
<div class="t " style="top:609.59px;font-size:11px;line-height:11px;color:#6b7484;right:387.20px;">150</div>
<div class="t " style="top:587.59px;font-size:11px;line-height:11px;color:#6b7484;right:387.20px;">200</div>
<div class="t " style="top:565.59px;font-size:11px;line-height:11px;color:#6b7484;right:387.20px;">250</div>
<div class="t " style="top:543.59px;font-size:11px;line-height:11px;color:#6b7484;right:387.20px;">300</div>
<div class="t " style="top:521.59px;font-size:11px;line-height:11px;color:#6b7484;right:387.20px;">350</div>
<div class="t " style="top:499.59px;font-size:11px;line-height:11px;color:#6b7484;right:387.20px;">400</div>
<div class="t " style="top:477.59px;font-size:11px;line-height:11px;color:#6b7484;right:387.20px;">450</div>
<div class="t " style="top:455.59px;font-size:11px;line-height:11px;color:#6b7484;right:387.20px;">500</div>
<div class="t " style="top:433.59px;font-size:11px;line-height:11px;color:#6b7484;right:387.20px;">550</div>
<div class="t " style="top:689.69px;font-size:11px;line-height:11px;color:#6b7484;left:806.10px;width:400px;text-align:center;">01/03/2024</div>
<div class="t " style="top:689.69px;font-size:11px;line-height:11px;color:#6b7484;left:885.24px;width:400px;text-align:center;">09/03/2024</div>
<div class="t " style="top:689.69px;font-size:11px;line-height:11px;color:#6b7484;left:964.39px;width:400px;text-align:center;">17/03/2024</div>
<div class="t " style="top:689.69px;font-size:11px;line-height:11px;color:#6b7484;left:1043.53px;width:400px;text-align:center;">25/03/2024</div>
<div style="position:absolute;left:1099.80px;top:723px;width:13.1px;height:13.1px;background:#4595f4;opacity:0.65"></div>
<div class="t " style="top:722.89px;font-size:15.6px;line-height:15.6px;color:#5d6879;left:1122.60px;letter-spacing:0.3px;">Difference</div>
<svg style="left:945.70px;top:364.60px" width="16" height="16" viewBox="0 0 16 16"><path d="M8.0 0.5499999999999998A7.45 7.45 0 1 1 1.68 4.05L5.50 6.44A2.95 2.95 0 1 0 8.0 5.05Z M8.0 10.95V15.45M5.10 8.55L0.68 9.38" fill="none" stroke="#3a3f49" stroke-width="1.05" stroke-linejoin="round" stroke-linecap="round"/></svg>
<div class="t tt" style="top:364.98px;font-size:15.5px;line-height:15.5px;color:#3c414c;left:972.40px;letter-spacing:0.45px;">Daily Pickup</div>
<div style="position:absolute;left:1320px;top:359px;width:28px;height:28px;border-radius:50%;background:#fbfbfd"></div>
<svg style="left:0;top:0" width="1365" height="854"><g fill="#1d212a"><circle cx="1333.9" cy="367.8" r="1.05"/><circle cx="1333.9" cy="372.9" r="1.05"/><circle cx="1333.9" cy="378.0" r="1.05"/></g><path d="M1348.100 757.000H1354.200V752.200" fill="none" stroke="#b1b3b8" stroke-width="1.7"/></svg>
<div class="card" style="left:14.40px;top:786.80px;width:547.40px;height:120.00px"></div>
<svg style="left:33.30px;top:804.80px" width="16" height="16" viewBox="0 0 16 16"><path d="M8.0 0.5499999999999998A7.45 7.45 0 1 1 1.68 4.05L5.50 6.44A2.95 2.95 0 1 0 8.0 5.05Z M8.0 10.95V15.45M5.10 8.55L0.68 9.38" fill="none" stroke="#3a3f49" stroke-width="1.05" stroke-linejoin="round" stroke-linecap="round"/></svg>
<div class="t tt" style="top:805.18px;font-size:15.5px;line-height:15.5px;color:#3c414c;left:60.00px;letter-spacing:0.39px;">Room nights by Room Type</div>
<div class="t m" style="top:806.57px;font-size:13.5px;line-height:13.5px;color:#7b8494;right:845.00px;letter-spacing:0.4px;">Last calendar year</div>
<svg style="left:0;top:0" width="1365" height="854"><path d="M536.70 807.10L536.70 818.50M531.76 809.95L541.64 815.65M531.76 815.65L541.64 809.95" stroke="#e8a81c" stroke-width="1.45" stroke-linecap="round" fill="none"/></svg>
<div class="card" style="left:584.00px;top:786.80px;width:548.90px;height:120.00px"></div>
<svg style="left:603.15px;top:805.00px" width="18" height="16" viewBox="0 0 18 16"><path d="M0.7 11.3V5.7A5.6 5.6 0 1 1 6.3 11.3Z M11.9 4.3A5.6 5.6 0 0 1 17.5 9.9V15.5H11.9A5.6 5.6 0 0 1 6.6 11.6" fill="none" stroke="#3a3f49" stroke-width="1.05" stroke-linejoin="round" stroke-linecap="round"/></svg>
<div class="t tt" style="top:805.18px;font-size:15.5px;line-height:15.5px;color:#3c414c;left:630.25px;letter-spacing:0.53px;">Review source proportions</div>
<div class="card" style="left:1155.10px;top:786.80px;width:206.10px;height:120.00px"></div>
<svg style="left:1173.80px;top:805.00px" width="18" height="16" viewBox="0 0 18 16"><path d="M0.7 11.3V5.7A5.6 5.6 0 1 1 6.3 11.3Z M11.9 4.3A5.6 5.6 0 0 1 17.5 9.9V15.5H11.9A5.6 5.6 0 0 1 6.6 11.6" fill="none" stroke="#3a3f49" stroke-width="1.05" stroke-linejoin="round" stroke-linecap="round"/></svg>
<div class="t tt" style="top:805.18px;font-size:15.5px;line-height:15.5px;color:#3c414c;left:1200.90px;letter-spacing:0.45px;">Review score</div>
</div></body></html>
